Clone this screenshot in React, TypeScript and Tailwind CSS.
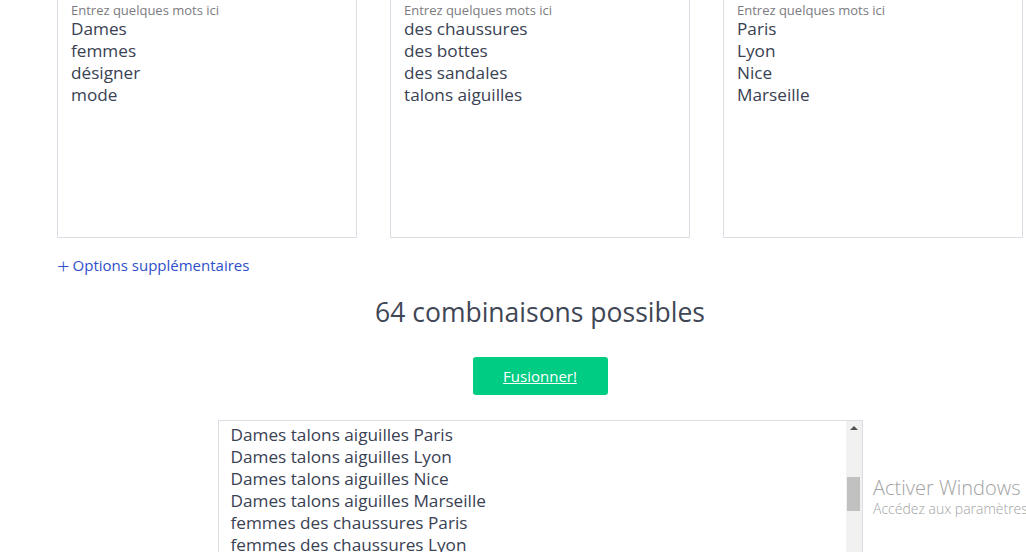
import React from "react";

const lists = [
  ["Dames", "femmes", "désigner", "mode"],
  ["des chaussures", "des bottes", "des sandales", "talons aiguilles"],
  ["Paris", "Lyon", "Nice", "Marseille"],
];

const combos: string[] = [];
lists[0].forEach((a) =>
  lists[1].forEach((b) => lists[2].forEach((c) => combos.push(`${a} ${b} ${c}`)))
);

const App = () => {
  return (
    <div
      className="relative h-[552px] w-full overflow-hidden bg-white"
      style={{ fontFamily: "'Open Sans', 'Liberation Sans', sans-serif" }}
    >
      <div className="ml-[57px] w-[966px]">
        {/* keyword boxes */}
        <div className="-mt-[7px] flex gap-[33px]">
          {lists.map((words, i) => (
            <div
              key={i}
              className="h-[245px] w-[300px] border border-[#dedde6] px-[13px] pt-[9px]"
            >
              <div className="text-[13px] leading-[15px] text-[#7b7b80]">
                Entrez quelques mots ici
              </div>
              <div className="text-[17.2px] leading-[22px] text-[#394153]">
                {words.map((w) => (
                  <div key={w}>{w}</div>
                ))}
              </div>
            </div>
          ))}
        </div>

        <div className="mt-[17px] flex items-center text-[15px] leading-[20px] text-[#2e4fc9]">
          <span className="mr-[3px] text-[22px] font-light leading-[20px]">+</span>
          Options supplémentaires
        </div>

        <h2 className="mt-[21px] text-center text-[26.5px] leading-[32px] text-[#3f4655]">
          64 combinaisons possibles
        </h2>

        <div className="mt-[29px] flex justify-center">
          <button className="h-[38px] w-[135px] rounded-[3px] bg-[#00cc83] text-[15px] text-white underline">
            Fusionner!
          </button>
        </div>

        <div className="mx-auto mt-[25px] flex h-[200px] w-[645px] border border-[#dedde6]">
          <div className="flex-1 overflow-hidden pl-[12px] pt-[3px] text-[17.2px] leading-[22px] text-[#394153]">
            {combos.slice(12).map((c) => (
              <div key={c}>{c}</div>
            ))}
          </div>
          <div className="relative w-[16px] bg-[#f1f1f1]">
            <div className="absolute left-[4px] top-[5px] h-0 w-0 border-x-[4px] border-b-[4px] border-x-transparent border-b-[#505050]" />
            <div className="absolute left-[1px] top-[56px] h-[34px] w-[13px] bg-[#c1c1c1]" />
          </div>
        </div>
      </div>

      {/* windows activation watermark */}
      <div
        className="absolute left-[873px] top-[476px] whitespace-nowrap text-[#a3a3a3]"
        style={{ fontFamily: "'Open Sans', sans-serif" }}
      >
        <div className="text-[20px] font-light leading-[24px]">Activer Windows</div>
        <div className="text-[14px] font-light leading-[18px]">Accédez aux paramètres pour activer Windows.</div>
      </div>
    </div>
  );
};

export default App;
